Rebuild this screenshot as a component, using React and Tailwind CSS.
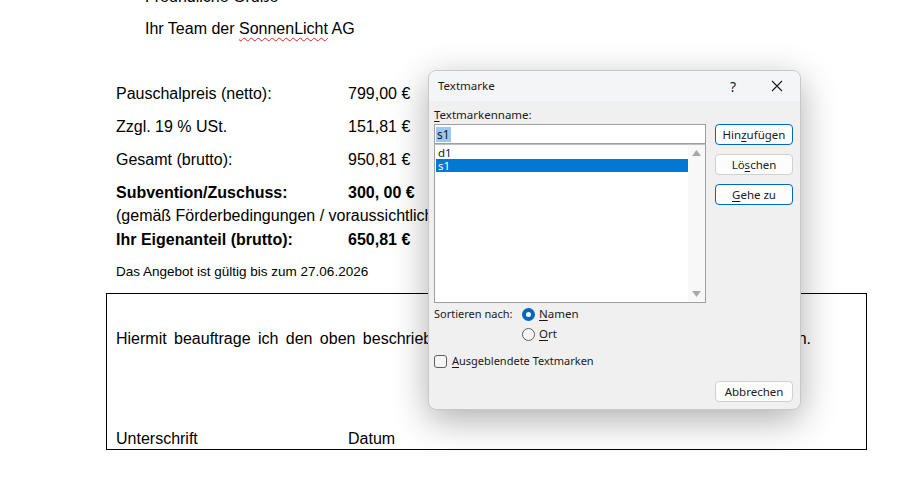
import { useState } from 'react'

const docFont = { fontFamily: '"Liberation Sans", Arial, sans-serif' }
const uiFont = { fontFamily: '"Noto Sans", "Segoe UI", sans-serif' }

function U({ children }) {
  return <span className="underline underline-offset-2">{children}</span>
}

function Btn({ children, primary, className = '' }) {
  return (
    <div
      className={`h-[21px] w-[78px] rounded-[4px] bg-[#fdfdfd] flex items-center justify-center text-[11.5px] text-[#1a1a1a] ${
        primary ? 'border border-[#0067c0]' : 'border border-[#d0d0d0]'
      } ${className}`}
    >
      {children}
    </div>
  )
}

function Radio({ checked }) {
  return checked ? (
    <span className="w-[13px] h-[13px] rounded-full bg-[#0067c0] flex items-center justify-center">
      <span className="w-[5px] h-[5px] rounded-full bg-white" />
    </span>
  ) : (
    <span className="w-[13px] h-[13px] rounded-full border border-[#5f5f5f] bg-[#f6f6f6]" />
  )
}

function Dialog() {
  const [sort, setSort] = useState('name')
  const [selected, setSelected] = useState('s1')
  const marks = ['d1', 's1']

  return (
    <div
      className="absolute left-[428px] top-[70px] w-[373px] h-[340px] rounded-[8px] border border-[#c8c8c8] bg-[#f0f0f0] shadow-[0_10px_36px_rgba(0,0,0,0.32)] overflow-hidden flex flex-col"
      style={uiFont}
    >
      <div className="h-[30px] bg-[#f3f5f7] flex items-center pl-[9px] text-[11.5px] text-[#1a1a1a]">
        <span className="flex-1">Textmarke</span>
        <span className="w-[20px] text-center text-[14px] mr-[27px]">?</span>
        <svg width="14" height="14" viewBox="0 0 14 14" className="mr-[16px]">
          <path d="M2 2 L12 12 M12 2 L2 12" stroke="#1a1a1a" strokeWidth="1.1" />
        </svg>
      </div>

      <div className="flex-1 flex flex-col pl-[5px] pr-[7px] text-[11px]">
        <div className="flex gap-[9px]">
          <div className="w-[272px] flex flex-col">
            <div className="mt-[5px] h-[17px] leading-[17px] text-[11.5px] text-[#1a1a1a]">
              <U>T</U>extmarkenname:
            </div>
            <div className="mt-[1px] h-[20px] border border-[#a0a0a0] bg-white flex items-center px-[1px] text-[12px]">
              <span className="bg-[#99c8f0] leading-[15px] text-[#1a1a1a] px-[1px]">s1</span>
            </div>
            <div className="h-[159px] border border-[#a0a0a0] border-t-[#c0c0c0] bg-white flex text-[11.5px]">
              <div className="flex-1 pt-[1px] pl-[1px]">
                {marks.map((m) => (
                  <div
                    key={m}
                    onClick={() => setSelected(m)}
                    className={`h-[13px] leading-[13px] pl-[2px] ${
                      selected === m ? 'bg-[#0078d4] text-white' : 'text-[#1a1a1a]'
                    }`}
                  >
                    {m}
                  </div>
                ))}
              </div>
              <div className="w-[17px] bg-[#f8f8f8] flex flex-col items-center justify-between py-[5px]">
                <svg width="9" height="6" viewBox="0 0 9 6">
                  <path d="M4.5 0 L9 6 L0 6 Z" fill="#a8a8a8" />
                </svg>
                <svg width="9" height="6" viewBox="0 0 9 6">
                  <path d="M0 0 L9 0 L4.5 6 Z" fill="#a8a8a8" />
                </svg>
              </div>
            </div>

            <div className="mt-[3px] flex text-[#1a1a1a]">
              <span className="w-[88px] leading-[16px]">Sortieren nach:</span>
              <div className="flex flex-col gap-[4px] text-[11.5px]">
                <label className="flex items-center gap-[4px] h-[16px]" onClick={() => setSort('name')}>
                  <Radio checked={sort === 'name'} />
                  <span>
                    <U>N</U>amen
                  </span>
                </label>
                <label className="flex items-center gap-[4px] h-[16px]" onClick={() => setSort('ort')}>
                  <Radio checked={sort === 'ort'} />
                  <span>
                    <U>O</U>rt
                  </span>
                </label>
              </div>
            </div>

            <label className="mt-[11px] flex items-center gap-[5px] text-[#1a1a1a]">
              <span className="w-[13px] h-[13px] rounded-[3px] border border-[#5f5f5f] bg-[#f6f6f6]" />
              <span>
                <U>A</U>usgeblendete Textmarken
              </span>
            </label>
          </div>

          <div className="flex flex-col pt-[23px]">
            <Btn primary>
              <span>
                Hin<U>z</U>ufügen
              </span>
            </Btn>
            <Btn className="mt-[9px]">
              <span>
                Lö<U>s</U>chen
              </span>
            </Btn>
            <Btn primary className="mt-[9px]">
              <span>
                <U>G</U>ehe zu
              </span>
            </Btn>
          </div>
        </div>
        <div className="mt-auto mb-[7px] flex justify-end">
          <Btn className="w-[74px]">Abbrechen</Btn>
        </div>
      </div>
    </div>
  )
}

export default function App() {
  const rows = [
    ['Pauschalpreis (netto):', '799,00 €'],
    ['Zzgl. 19 % USt.', '151,81 €'],
    ['Gesamt (brutto):', '950,81 €'],
  ]

  return (
    <div className="relative w-[908px] h-[488px] bg-white overflow-hidden text-black" style={docFont}>
      <div className="pl-[116px] text-[16px] leading-[20px]">
        <div className="-mt-[13px] pl-[29px]">Freundliche Grüße</div>
        <div className="mt-[12px] pl-[29px]">
          Ihr Team der{' '}
          <span className="underline decoration-wavy decoration-[#e02020] decoration-1 underline-offset-[3px]">
            SonnenLicht
          </span>{' '}
          AG
        </div>

        <div className="mt-[45px] flex flex-col gap-[13px]">
          {rows.map(([label, value]) => (
            <div key={label} className="flex">
              <span className="w-[232px]">{label}</span>
              <span>{value}</span>
            </div>
          ))}
          <div className="flex font-bold">
            <span className="w-[232px]">Subvention/Zuschuss:</span>
            <span>300, 00 €</span>
          </div>
        </div>
        <div className="mt-[3px] whitespace-nowrap">
          (gemäß Förderbedingungen / voraussichtlicher Zuschuss)
        </div>
        <div className="mt-[4px] flex font-bold">
          <span className="w-[232px]">Ihr Eigenanteil (brutto):</span>
          <span>650,81 €</span>
        </div>
        <div className="mt-[13px] text-[13.5px] leading-[18px]">Das Angebot ist gültig bis zum 27.06.2026</div>
      </div>

      <div className="ml-[106px] mt-[12px] w-[761px] h-[157px] border border-black flex flex-col pl-[9px] pt-[35px] text-[16px] leading-[20px]">
        <div className="w-[695px] whitespace-nowrap text-justify [text-align-last:justify]">
          Hiermit beauftrage ich den oben beschriebenen Auftrag zu den hier vereinbarten Konditionen.
        </div>
        <div className="mt-auto flex">
          <span className="w-[232px]">Unterschrift</span>
          <span>Datum</span>
        </div>
      </div>

      <Dialog />
    </div>
  )
}
